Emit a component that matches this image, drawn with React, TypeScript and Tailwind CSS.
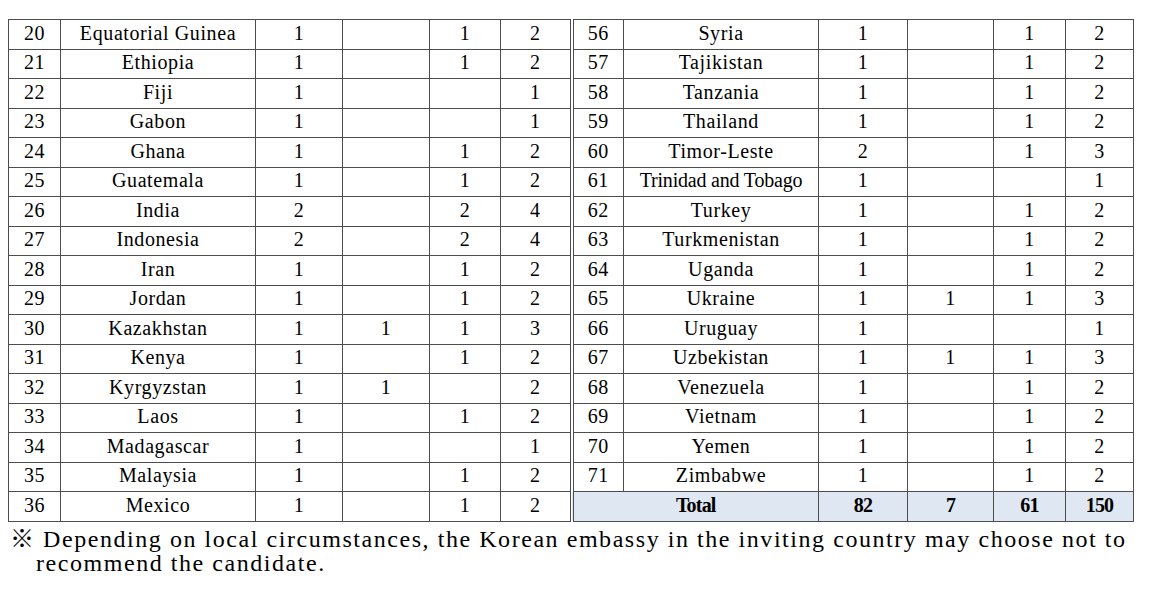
import React from "react";

type Row = [string, string, string, string, string, string];

const left: Row[] = [
  ["20", "Equatorial Guinea", "1", "", "1", "2"],
  ["21", "Ethiopia", "1", "", "1", "2"],
  ["22", "Fiji", "1", "", "", "1"],
  ["23", "Gabon", "1", "", "", "1"],
  ["24", "Ghana", "1", "", "1", "2"],
  ["25", "Guatemala", "1", "", "1", "2"],
  ["26", "India", "2", "", "2", "4"],
  ["27", "Indonesia", "2", "", "2", "4"],
  ["28", "Iran", "1", "", "1", "2"],
  ["29", "Jordan", "1", "", "1", "2"],
  ["30", "Kazakhstan", "1", "1", "1", "3"],
  ["31", "Kenya", "1", "", "1", "2"],
  ["32", "Kyrgyzstan", "1", "1", "", "2"],
  ["33", "Laos", "1", "", "1", "2"],
  ["34", "Madagascar", "1", "", "", "1"],
  ["35", "Malaysia", "1", "", "1", "2"],
  ["36", "Mexico", "1", "", "1", "2"],
];

const right: Row[] = [
  ["56", "Syria", "1", "", "1", "2"],
  ["57", "Tajikistan", "1", "", "1", "2"],
  ["58", "Tanzania", "1", "", "1", "2"],
  ["59", "Thailand", "1", "", "1", "2"],
  ["60", "Timor-Leste", "2", "", "1", "3"],
  ["61", "Trinidad and Tobago", "1", "", "", "1"],
  ["62", "Turkey", "1", "", "1", "2"],
  ["63", "Turkmenistan", "1", "", "1", "2"],
  ["64", "Uganda", "1", "", "1", "2"],
  ["65", "Ukraine", "1", "1", "1", "3"],
  ["66", "Uruguay", "1", "", "", "1"],
  ["67", "Uzbekistan", "1", "1", "1", "3"],
  ["68", "Venezuela", "1", "", "1", "2"],
  ["69", "Vietnam", "1", "", "1", "2"],
  ["70", "Yemen", "1", "", "1", "2"],
  ["71", "Zimbabwe", "1", "", "1", "2"],
];

const td = "border border-[#4d4d4d] text-center align-middle p-0 pb-[3px] leading-[22px]";
const dbl = " border-l-4 border-double";
const tot = " bg-[#dfe7f3] font-bold tracking-[-0.8px]";

export default function App() {
  return (
    <div
      className="w-[1150px] h-[596px] bg-white text-black overflow-hidden pt-[19px] pl-[8px]"
      style={{ fontFamily: '"Liberation Serif", "Times New Roman", serif' }}
    >
      <table className="table-fixed border-collapse w-[1125px] text-[20px] tracking-[0.6px]">
        <colgroup>
          <col className="w-[52px]" />
          <col className="w-[195px]" />
          <col className="w-[87px]" />
          <col className="w-[87px]" />
          <col className="w-[71px]" />
          <col className="w-[71px]" />
          <col className="w-[52px]" />
          <col className="w-[195px]" />
          <col className="w-[89px]" />
          <col className="w-[86px]" />
          <col className="w-[72px]" />
          <col className="w-[68px]" />
        </colgroup>
        <tbody>
          {left.map((l, i) => {
            const r = right[i];
            return (
              <tr key={i} className="h-[29.5px]">
                {l.map((c, j) => (
                  <td key={"l" + j} className={td}>
                    {c}
                  </td>
                ))}
                {r ? (
                  r.map((c, j) => (
                    <td
                      key={"r" + j}
                      className={
                        td +
                        (j === 0 ? dbl : "") +
                        (r[1] === "Trinidad and Tobago" && j === 1 ? " tracking-[-0.2px]" : "")
                      }
                    >
                      {c}
                    </td>
                  ))
                ) : (
                  <>
                    <td colSpan={2} className={td + dbl + tot}>
                      Total
                    </td>
                    <td className={td + tot}>82</td>
                    <td className={td + tot}>7</td>
                    <td className={td + tot}>61</td>
                    <td className={td + tot}>150</td>
                  </>
                )}
              </tr>
            );
          })}
        </tbody>
      </table>
      <p
        className="mt-[5px] w-[1134px] pl-[28px] -indent-[26px] text-[24px] leading-[24px] tracking-[1.55px]"
        style={{ fontFamily: '"Liberation Serif", "Noto Sans CJK KR", serif' }}
      >
        ※ Depending on local circumstances, the Korean embassy in the inviting country may choose not to recommend the candidate.
      </p>
    </div>
  );
}
